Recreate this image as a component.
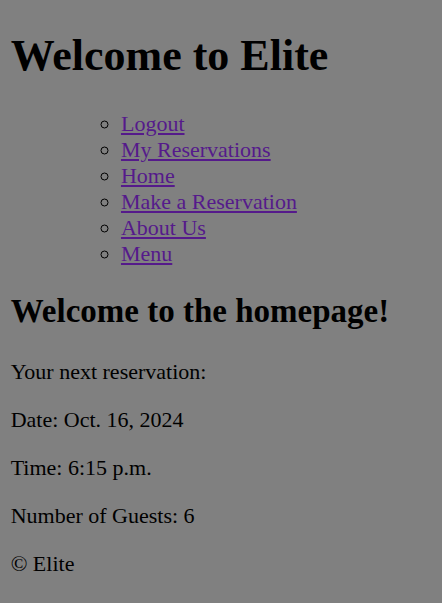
export default function App() {
  const links = ["Logout", "My Reservations", "Home", "Make a Reservation", "About Us", "Menu"];
  return (
    <div
      className="min-h-[603px] bg-[#808080] text-black px-[10.67px] flow-root"
      style={{ fontFamily: '"Liberation Serif", "Times New Roman", serif' }}
    >
      <h1 className="text-[44px] leading-[50.6px] font-bold mt-[31px] mb-[29.5px]">Welcome to Elite</h1>
      <nav>
        <ul className="list-[circle] list-outside pl-[110.3px] text-[22px] leading-[26px]">
          {links.map((l) => (
            <li key={l}>
              <a href="#" className="text-[#551a8b] underline">
                {l}
              </a>
            </li>
          ))}
        </ul>
      </nav>
      <h2 className="text-[33px] leading-[38px] font-bold mt-[25px] mb-[28.5px]">Welcome to the homepage!</h2>
      <div className="text-[22px] leading-[26px]">
        <p className="my-[22px]">Your next reservation:</p>
        <p className="my-[22px]">Date: Oct. 16, 2024</p>
        <p className="my-[22px]">Time: 6:15 p.m.</p>
        <p className="my-[22px]">Number of Guests: 6</p>
        <p className="my-[22px]">© Elite</p>
      </div>
    </div>
  );
}
